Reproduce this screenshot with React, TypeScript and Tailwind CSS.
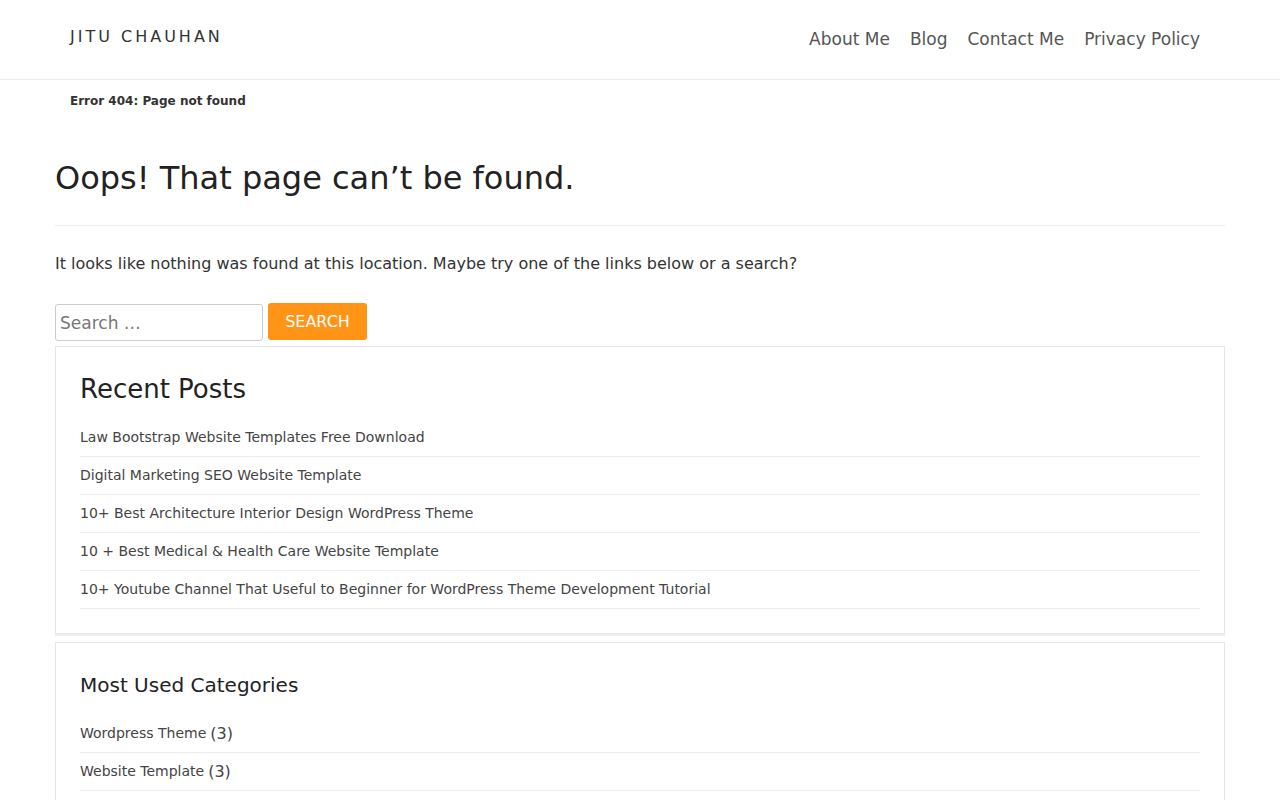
const recentPosts = [
  "Law Bootstrap Website Templates Free Download",
  "Digital Marketing SEO Website Template",
  "10+ Best Architecture Interior Design WordPress Theme",
  "10 + Best Medical & Health Care Website Template",
  "10+ Youtube Channel That Useful to Beginner for WordPress Theme Development Tutorial",
]

const categories = [
  { name: "Wordpress Theme", count: 3 },
  { name: "Website Template", count: 3 },
]

const navItems = ["About Me", "Blog", "Contact Me", "Privacy Policy"]

export default function App() {
  return (
    <div className="min-h-screen bg-white text-[#333] font-['DejaVu_Sans',sans-serif]">
      {/* Header */}
      <header className="h-20 border-b border-[#eee] flex items-start justify-between pl-[70px] pr-[80px]">
        <a href="#" className="mt-[27px] text-[16px] leading-5 tracking-[3px] text-[#333]">
          JITU CHAUHAN
        </a>
        <nav className="mt-[28px] flex items-center gap-5">
          {navItems.map((item) => (
            <a key={item} href="#" className="text-[17px] leading-[22px] text-[#555]">
              {item}
            </a>
          ))}
        </nav>
      </header>

      {/* Breadcrumb */}
      <div className="pl-[70px] pt-[13px] text-[12px] leading-4 font-bold text-[#333]">
        Error 404: Page not found
      </div>

      <main className="w-[1170px] mx-auto pt-[49px]">
        <h1 className="text-[32px] leading-10 text-[#222]">Oops! That page can’t be found.</h1>
        <hr className="mt-[27px] border-t border-[#eee]" />
        <p className="mt-[26px] text-[16px] leading-6 text-[#333]">
          It looks like nothing was found at this location. Maybe try one of the links below or a search?
        </p>

        <form className="mt-[27px] flex items-start gap-[5px]" onSubmit={(e) => e.preventDefault()}>
          <input
            type="search"
            placeholder="Search …"
            className="mt-px w-[208px] h-[37px] border border-[#ccc] rounded-[3px] px-1 text-[17px] text-[#333] placeholder:text-[#777] outline-none"
          />
          <button type="submit" className="w-[99px] h-[37px] bg-[#ff9417] rounded-[3px] text-white text-[16px]">
            SEARCH
          </button>
        </form>

        {/* Recent Posts */}
        <section className="mt-[5px] border border-[#e5e5e5] shadow-[0_2px_0_#eee] px-6 pt-[25px] pb-6">
          <h2 className="text-[26px] leading-[34px] text-[#222] mb-[13px]">Recent Posts</h2>
          <ul>
            {recentPosts.map((post) => (
              <li key={post} className="h-[38px] flex items-center border-b border-[#eee] text-[14px] text-[#444]">
                <a href="#">{post}</a>
              </li>
            ))}
          </ul>
        </section>

        {/* Categories */}
        <section className="mt-2 border border-[#e5e5e5] shadow-[0_2px_0_#eee] px-6 pt-[25px] pb-6">
          <h2 className="text-[20px] leading-[34px] text-[#222] mb-[13px]">Most Used Categories</h2>
          <ul>
            {categories.map((c) => (
              <li key={c.name} className="h-[38px] flex items-center border-b border-[#eee] text-[14px] text-[#444]">
                <a href="#">{c.name}</a>
                <span className="ml-1 text-[16px]">({c.count})</span>
              </li>
            ))}
          </ul>
        </section>
      </main>
    </div>
  )
}
